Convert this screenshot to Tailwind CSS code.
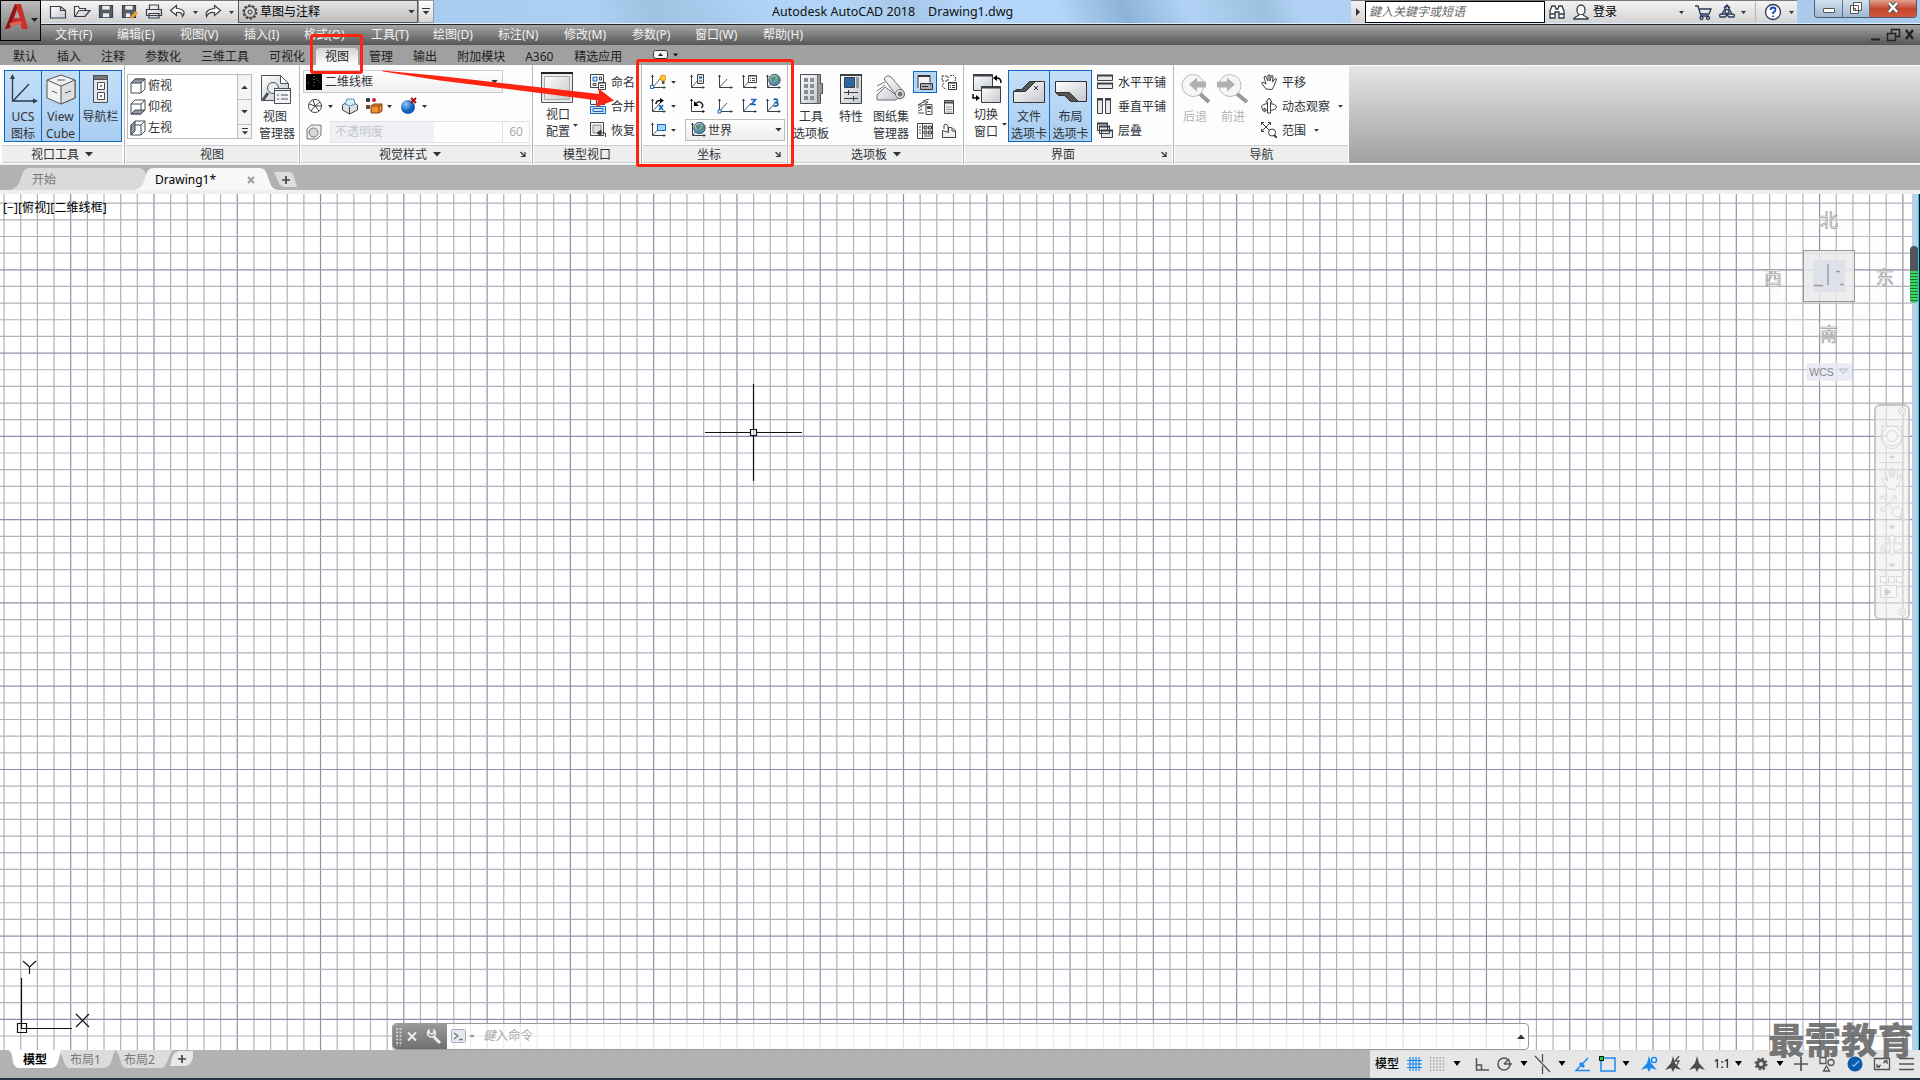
<!DOCTYPE html>
<html lang="zh-CN">
<head>
    <meta charset="UTF-8">
    <meta name="viewport" content="width=device-width, initial-scale=1.0">
    <title>Autodesk AutoCAD 2018</title>
    <script src="https://cdn.jsdelivr.net/npm/@tailwindcss/browser@4"></script>
</head>
<body class="w-[1920px] h-[1080px] overflow-hidden relative bg-[#b2b2b2] text-[12px] leading-[17px] text-[#2f3338] font-['Noto_Sans','Noto_Sans_CJK_SC',sans-serif]">

    <!-- shared icons -->
    <svg class="absolute w-0 h-0">
        <defs>
            <linearGradient id="steel" x1="0" y1="0" x2="1" y2="1"><stop offset="0" stop-color="#fff"/><stop offset="1" stop-color="#c4c7cc"/></linearGradient>
            <radialGradient id="globe" cx=".35" cy=".3"><stop offset="0" stop-color="#d8f0f6"/><stop offset="1" stop-color="#4d8ba6"/></radialGradient>
            <radialGradient id="ball" cx=".35" cy=".3"><stop offset="0" stop-color="#8cc8ff"/><stop offset="1" stop-color="#0f5fb4"/></radialGradient>
            <symbol id="down" viewBox="0 0 8 5"><path d="M0 0h8L4 4.5z" fill="#333"/></symbol>
            <symbol id="ucs" viewBox="0 0 16 16"><path d="M2.5 1v12.500H15" fill="none" stroke="#3a3f46"/><path d="M3 13l7-8" fill="none" stroke="#5a6068"/><path d="M1 3l1.500-2.500L4 3zM13.500 12l2.500 1.500-2.500 1.500z" fill="#3a3f46"/></symbol>
            <symbol id="cornerarrow" viewBox="0 0 6 6"><path d="M.5 1l4 4M5 1v4.500H1" fill="none" stroke="#333" stroke-width="1.200"/></symbol>
            <symbol id="axismark" viewBox="0 0 16 16"><path d="M8 0l2 7 6 7-6-2-2 4-2-4-6 2 6-7z"/></symbol>
        </defs>
    </svg>

    <!-- title bar -->
    <div class="h-6 flex bg-linear-to-r from-[#9ec4ea] via-[#b4d6f8] to-[#a9c9ea] border-b border-[#dcecfb]">
        <div class="w-[41px] shrink-0"></div>
        <div class="w-[197px] flex items-center border-t border-[#777] bg-linear-to-b from-[#f6f6f6] to-[#d0d0d0] shrink-0">
            <svg class="w-[197px] h-[23px]" viewBox="41 1 197 23" fill="none" stroke="#3c4046" stroke-width="1.200">
                <path d="M50.500 6.500h10l5 4v7.500h-15zM60.500 6.500v4h5" fill="url(#steel)"/>
                <path d="M74.500 16.500v-10h4l1 2h6v2M75 16.500l4-6h11l-5 6z" fill="url(#steel)"/>
                <path d="M99.500 5.500h13v12h-13z" fill="#59606a"/><path d="M102 5.500h8v4.500h-8zM102.500 13h7v4.500h-7z" fill="#eee" stroke-width=".6"/>
                <path d="M122.500 5.500h13v12h-13z" fill="#59606a"/><path d="M125 5.500h8v4.500h-8zM125.500 13h5v4.500h-5z" fill="#eee" stroke-width=".6"/><path d="M131 18l6-6" stroke="#f0a030" stroke-width="3"/>
                <path d="M149.500 9.500V5h9v4.500M146.500 9.500h15v6h-15zM149 13.500h10v4.500h-10z" fill="url(#steel)"/>
                <path d="M176.500 5.500l-6 5 6 5v-3q6-1 6 4q5-7-6-8z" fill="#fff"/>
                <path d="M214.500 5.500l6 5-6 5v-3q-6-1-8 4q-2-7 8-8z" fill="#fff"/>
                <path d="M193 11h5l-2.500 3zM229 11h5l-2.500 3z" fill="#333" stroke="none"/>
            </svg>
        </div>
        <div class="w-[180px] shrink-0 border border-[#555] bg-linear-to-b from-[#e4e4e4] to-[#bdbdbd] flex items-center pl-[3px] text-black">
            <svg class="size-4" viewBox="0 0 16 16" fill="none" stroke="#444"><circle cx="8" cy="8" r="6.500" stroke-width="2" stroke-dasharray="2.500 1.500"/><circle cx="8" cy="8" r="5.500"/><circle cx="8" cy="8" r="2"/></svg>
            <span class="ml-0.5 leading-4">草图与注释</span>
            <svg class="w-[7px] h-1 ml-auto mr-0.5"><use href="#down"/></svg>
        </div>
        <div class="w-4 shrink-0 bg-linear-to-b from-white to-[#d5d5d5] flex flex-col items-center justify-center gap-0.5 border border-[#999]">
            <div class="w-2 h-[1.5px] bg-[#333]"></div>
            <svg class="w-2 h-1"><use href="#down"/></svg>
        </div>
        <div class="w-[917px] shrink-0 pl-[338px] text-[12.5px] leading-[23px] text-[#111] whitespace-pre bg-[linear-gradient(65deg,transparent_18%,#a0c2e2_24%,transparent_36%,transparent_45%,#a6c7e8_52%,transparent_58%,transparent_68%,#8db3d8_75%,transparent_82%,#9dc0e0_90%,transparent_94%)]">Autodesk AutoCAD 2018    Drawing1.dwg</div>
        <div class="w-[446px] shrink-0 flex items-center *:shrink-0 border-t border-[#777] bg-linear-to-b from-[#f4f4f4] to-[#d4d4d4]">
            <div class="w-3.5 flex justify-center"><svg class="w-1 h-2"><path d="M0 0l4 4-4 4z" fill="#333"/></svg></div>
            <div class="w-[180px] h-[22px] bg-white border border-black pl-[3px] leading-[20px] italic text-[#666]">鍵入关鍵字或短语</div>
            <svg class="w-12 h-[22px]" viewBox="1545 1 48 22" fill="#fff" stroke="#333a48" stroke-width="1.300"><path d="M1550 18v-7l2-5h3l1 3h2l1-3h3l2 5v7h-5v-6h-4v6zM1550 14h5M1559 14h5"/><ellipse cx="1581" cy="10" rx="4" ry="5"/><path d="M1579 15l-5 3v1h14v-1l-5-3"/></svg>
            <span class="text-black leading-4">登录</span>
            <svg class="w-[178px] h-[22px] ml-1" viewBox="1621 1 178 22" fill="none" stroke="#2c3a5c" stroke-width="1.300">
                <path d="M1679 11h5l-2.500 3zM1741 11h5l-2.500 3zM1789 11h5l-2.500 3z" fill="#333" stroke="none"/>
                <path d="M1695 6h3l3 10h8M1699 9h12l-2 5h-9"/><circle cx="1701.500" cy="18" r="1.500"/><circle cx="1708" cy="18" r="1.500"/>
                <path d="M1727 5l-5 9h10zM1723 14q-5 0-3 3h5l2-2 2 2h5q2-3-3-3M1724 8l3-3 3 3"/><circle cx="1727" cy="11.500" r="2"/>
                <path d="M1755.500 2v20" stroke="#bbb"/><circle cx="1773" cy="12" r="7.500" fill="#fff"/>
                <path d="M1770.500 10q0-2.500 2.500-2.500t2.500 2.500q0 1.500-2.500 2.500v1.500M1773 15.500v1.500" stroke="#1450b4" stroke-width="1.800"/>
            </svg>
        </div>
        <div class="w-[103px] h-[18px] ml-[17px] shrink-0 flex rounded-b border border-t-0 border-[#4d5a6a] overflow-hidden text-white">
            <div class="w-7 bg-linear-to-b from-[#d4e2f0] to-[#9fb8d1] border-r border-[#5e7085] flex justify-center pt-2"><div class="w-3 h-[5px] bg-white border border-[#555] rounded-[1px]"></div></div>
            <div class="w-[27px] bg-linear-to-b from-[#d4e2f0] to-[#9fb8d1] border-r border-[#5e7085] flex justify-center pt-[2px]"><svg class="w-3 h-3" fill="#fff" stroke="#555"><path d="M3.500.5h8v8h-8zM.5 3.500h8v8h-8zM3.500 6.500h2v2h-2z"/></svg></div>
            <div class="grow bg-linear-to-b from-[#e3a193] via-[#c44630] to-[#d2563c] flex justify-center pt-[2px]"><svg class="w-3 h-3"><path d="M2 1l8 9M10 1l-8 9" stroke="#555" stroke-width="4.500"/><path d="M2 1l8 9M10 1l-8 9" stroke="#fff" stroke-width="2.500"/></svg></div>
        </div>
    </div>

    <!-- menu bar -->
    <div class="h-[21px] border-t border-[#222] bg-linear-to-b from-[#a5a5a5] to-[#565656] flex items-center pl-[55px] text-[#f2f2f2] text-[12px] leading-5 whitespace-nowrap">
        <span class="w-[62px]">文件(F)</span>
        <span class="w-[63px]">编辑(E)</span>
        <span class="w-16">视图(V)</span>
        <span class="w-[60px]">插入(I)</span>
        <span class="w-[67px]">格式(O)</span>
        <span class="w-[62px]">工具(T)</span>
        <span class="w-[65px]">绘图(D)</span>
        <span class="w-[66px]">标注(N)</span>
        <span class="w-[68px]">修改(M)</span>
        <span class="w-[63px]">参数(P)</span>
        <span class="w-[68px]">窗口(W)</span>
        <span>帮助(H)</span>
        <svg class="w-[46px] h-3.5 ml-auto mr-[3px]" fill="none" stroke="#222"><path d="M0 11.500h9" stroke-width="2"/><path d="M20.500 5V1.500h8v7h-4M16.500 5.500h8v7h-8z" stroke-width="1.500"/><path d="M35 2l7 9M42 2l-7 9" stroke-width="2.500"/></svg>
    </div>

    <!-- ribbon tabs -->
    <div class="h-5 bg-[#a0a0a0] flex items-center pl-[13px] gap-5 leading-5 pt-[3px] text-[#222] whitespace-nowrap">
        <span>默认</span><span>插入</span><span>注释</span><span>参数化</span><span>三维工具</span><span>可视化</span>
        <span class="w-[42px] -mx-[9px] h-[17px] leading-[17px] text-center rounded-t bg-linear-to-b from-[#d4d4d4] to-white">视图</span>
        <span>管理</span><span>输出</span><span>附加模块</span><span class="w-[29px]">A360</span><span>精选应用</span>
        <svg class="w-7 h-[11px] ml-[11px] -mt-1"><rect x=".5" y="1.500" width="14" height="8" rx="2" fill="#f4f4f4" stroke="#333"/><path d="M5 7l2.500-3L10 7z" fill="#222"/><path d="M20 4.500h5l-2.500 3z" fill="#111"/></svg>
    </div>

    <!-- ribbon -->
    <div class="h-[100px] flex bg-[#fdfdfd] border-b border-[#eee] whitespace-nowrap">
        <!-- 视口工具 -->
        <section class="w-[125px] shrink-0 flex flex-col border-r border-[#b8b8b8]">
            <div class="h-20 flex pt-[5px] pl-1 text-center">
                <button class="w-[38px] h-[72px] border border-[#1468bc] bg-linear-to-b from-[#c4dff7] to-[#a9cef2] flex flex-col items-center pt-[3px]">
                    <svg class="w-8 h-[34px] shrink-0" fill="none" stroke="#2f3a48" stroke-width="1.300"><path d="M5.500 3v24H28M6 27L22 10"/><path d="M3 5l2.500-5L8 5zM26 24.500l5 2.500-5 2.500z" fill="#2f3a48" stroke="none"/></svg>
                    <div>UCS</div><div>图标</div>
                </button>
                <button class="w-[38px] h-[72px] border border-l-0 border-[#1468bc] bg-linear-to-b from-[#c4dff7] to-[#a9cef2] flex flex-col items-center pt-[3px]">
                    <svg class="w-8 h-[34px] shrink-0" fill="#f2f2f2" stroke="#555"><path d="M16 1L2 6v18l14 6 14-6V6z"/><path d="M2 6l14 6v18l14-6V6l-14 6" fill="#dcdee0"/><path d="M12 6h8M7 17l5 2M20 19l6-2"/></svg>
                    <div>View</div><div>Cube</div>
                </button>
                <button class="w-[42px] h-[72px] border border-l-0 border-[#1468bc] bg-linear-to-b from-[#c4dff7] to-[#a9cef2] flex flex-col items-center pt-[3px]">
                    <svg class="w-8 h-[34px] shrink-0" fill="#e4e6e9" stroke="#4b5058"><path d="M8.500 1.500h14v27h-14z"/><path d="M8.500 1.500h14v4h-14z" fill="#777"/><path d="M12.500 8.500h7v7h-7zM12.500 18.500h7v7h-7z" fill="#fff"/><path d="M15.500 11.500h1v1h-1zM15.500 21.500h1v1h-1z"/></svg>
                    <div>导航栏</div>
                </button>
            </div>
            <div class="h-[18px] mx-[2px] bg-[#eee] border-y border-[#ccc] flex items-center justify-center gap-1.5">视口工具<svg class="w-2 h-[5px]"><use href="#down"/></svg></div>
        </section>
        <!-- 视图 -->
        <section class="w-[175px] shrink-0 flex flex-col border-r border-[#b8b8b8]">
            <div class="h-20 flex pt-[5px] pl-0.5">
                <div class="w-[125px] h-[65px] mt-1 border border-[#bbb] bg-white flex shrink-0">
                    <div class="w-[109px] pl-0.5">
                        <div class="h-[21px] flex items-center gap-0.5"><svg class="size-4" fill="#fff" stroke="#444b55"><path d="M1 5l4-4h10v10l-4 4H1zM11 5v10M11 5l4-4"/><path d="M1 5l4-4h10l-4 4z" fill="#8f98a5"/></svg>俯视</div>
                        <div class="h-[21px] flex items-center gap-0.5"><svg class="size-4" fill="#fff" stroke="#444b55"><path d="M1 5l4-4h10v10l-4 4H1zM1 5h10v10M11 5l4-4"/><path d="M1 15l4-4h10l-4 4z" fill="#8f98a5"/></svg>仰视</div>
                        <div class="h-[21px] flex items-center gap-0.5"><svg class="size-4" fill="#fff" stroke="#444b55"><path d="M1 5l4-4h10v10l-4 4H1zM1 5h10v10M11 5l4-4"/><path d="M1 5l4-4v10l-4 4z" fill="#8f98a5"/></svg>左视</div>
                    </div>
                    <div class="w-3.5 border-l border-[#bbb] bg-[#f4f4f4] flex flex-col">
                        <div class="h-[25px] flex items-center justify-center border-b border-[#bbb]"><svg class="w-[7px] h-1 rotate-180"><use href="#down"/></svg></div>
                        <div class="h-[25px] flex items-center justify-center border-b border-[#bbb]"><svg class="w-[7px] h-1"><use href="#down"/></svg></div>
                        <div class="grow flex flex-col items-center justify-center gap-0.5"><div class="w-1.5 h-px bg-[#333]"></div><svg class="w-1.5 h-1"><use href="#down"/></svg></div>
                    </div>
                </div>
                <div class="w-[46px] pt-1 text-center">
                    <svg class="w-8 h-[34px] ml-2" fill="url(#steel)" stroke="#4b5058"><path d="M1.500 1.500h19l8 8v17h-27zM20.500 1.500v8h8"/><circle cx="13" cy="14" r="5.500" fill="#e9eef2"/><path d="M8 19l-5 7" stroke-width="3"/><path d="M14.500 14.500h16v15h-16z" fill="#f4f4f4"/><path d="M14.500 14.500h16v2h-16zM17 21h2M21 21h7M17 25h2M21 25h7"/></svg>
                    <div>视图</div><div class="-mx-1 pl-1">管理器</div>
                </div>
            </div>
            <div class="h-[18px] mx-px bg-[#eee] border-y border-[#ccc] flex items-center justify-center">视图</div>
        </section>
        <!-- 视觉样式 -->
        <section class="w-[233px] shrink-0 flex flex-col border-r border-[#b8b8b8]">
            <div class="h-20 pt-[5px] pl-[3px]">
                <div class="w-[200px] h-[23px] border border-[#c9c9c9] bg-linear-to-b from-white to-[#eee] flex items-center pl-0.5 pr-1">
                    <svg class="size-4 bg-black" stroke="#999" fill="none"><path d="M8 2v12M2 9h3M10 4l4 5" stroke-dasharray="1 2"/></svg>
                    <span class="ml-[3px]">二维线框</span>
                    <svg class="w-[7px] h-1 ml-auto"><use href="#down"/></svg>
                </div>
                <svg class="block w-[228px] h-[26px]" viewBox="303 93 228 26" fill="#fff" stroke="#444">
                    <circle cx="315" cy="106" r="6.500"/><path d="M309 104l6 2 5-4M315 106l-2-6M315 106l4 5M311 111l4-5M315 106h6" fill="none"/>
                    <path d="M328 105h5l-2.500 3zM387 105h5l-2.500 3zM422 105h5l-2.500 3z" fill="#333" stroke="none"/>
                    <path d="M342.500 105l7-5 8 5v5l-8 4-7-4z" fill="#dcdfe3"/><path d="M345 104l2-5h7l1 5-5 2z" fill="#d6ecf8" stroke="#5590b8"/><path d="M349.500 107v7"/>
                    <path d="M371 106l3-2h8v7l-3 2h-8z" fill="#f19032" stroke="#884010"/><path d="M371 106h8v7M379 106l3-2" stroke="#884010" fill="none"/><path d="M366.500 98.500h3v3h-3z" fill="#222c80"/><path d="M366.500 105.500h3v3h-3z" fill="#a04010"/><circle cx="374" cy="100" r="2" fill="#d02020" stroke="none"/>
                    <circle cx="408" cy="107" r="7" fill="url(#ball)" stroke="none"/><path d="M411 98l5 5M416 98l-5 5" stroke="#b01010" stroke-width="2"/>
                </svg>
                <div class="flex items-center h-[22px] mt-0.5">
                    <svg class="size-4 ml-[3px]" fill="#eee" stroke="#777"><path d="M1 5l4-4h10v10l-4 4H1z"/><circle cx="7.500" cy="8.500" r="4.500" fill="#d6d6d6"/></svg>
                    <div class="ml-2 w-[200px] h-[22px] border border-[#e2e2e2] flex text-[#c3c6ca]">
                        <div class="w-[103px] bg-[#f0f1f4] pl-1 leading-5">不透明度</div>
                        <div class="ml-auto w-[27px] border-l border-[#e2e2e2] text-center leading-5 text-[#aaa]">60</div>
                    </div>
                </div>
            </div>
            <div class="h-[18px] mx-px pl-[78px] pr-[5px] bg-[#eee] border-y border-[#ccc] flex items-center gap-1.5">视觉样式<svg class="w-2 h-[5px]"><use href="#down"/></svg><svg class="size-1.5 ml-auto"><use href="#cornerarrow"/></svg></div>
        </section>
        <!-- 模型视口 -->
        <section class="w-[109px] shrink-0 flex flex-col border-r border-[#b8b8b8]">
            <div class="h-20 flex pt-[7px] pl-2">
                <div class="w-[49px] relative">
                    <svg class="w-8 h-[34px]" fill="#e9ebee" stroke="#555"><path d="M.5.5h31v30H.5z"/><path d="M0 1h32" stroke="#222" stroke-width="2"/><path d="M3.500 4.500h25v23h-25z" fill="url(#steel)" stroke="#aaa"/></svg>
                    <div class="pl-[5px]">视口</div><div class="pl-[5px]">配置</div>
                    <svg class="absolute w-[5px] h-[3px] left-[32px] top-[52px]"><use href="#down"/></svg>
                </div>
                <div class="flex flex-col -mt-[2px]">
                    <div class="h-6 flex items-center gap-[5px]"><svg class="size-4" fill="#fff" stroke="#444"><path d="M.5.5h13v13H.5z"/><path d="M3 3h4v4H3z" fill="#cfe7fa" stroke="#1468bc"/><path d="M9.500 3h2v3h-2zM3 9.500h3v2H3zM8.500 8.500h7v7h-7z"/><path d="M8.500 9h7M10 11.500h4M10 13.500h4"/></svg>命名</div>
                    <div class="h-6 flex items-center gap-[5px]"><svg class="size-4" fill="#fff" stroke="#444"><path d="M.5.500h6v6h-6zM8.500.5h6v6h-6z"/><path d="M.5 8.500h15v7H.5zM3 10.500h10v3H3z" fill="#cfe7fa" stroke="#1468bc"/></svg>合并</div>
                    <div class="h-6 flex items-center gap-[5px]"><svg class="size-4" fill="#ddd" stroke="#444"><path d="M.5.5h13v13H.5z" fill="#fff"/><path d="M3 3h8v8H3z" stroke="#888"/><path d="M15.500 15v-4h-5" fill="none"/><path d="M11 8l-4 3 4 3z" fill="#333"/></svg>恢复</div>
                </div>
            </div>
            <div class="h-[18px] mx-px bg-[#eee] border-y border-[#ccc] flex items-center justify-center">模型视口</div>
        </section>
        <!-- 坐标 -->
        <section class="w-[146px] shrink-0 flex flex-col border-r border-[#b8b8b8]">
            <div class="h-20 flex flex-col pt-[5px] pl-2">
                <div class="h-6 flex items-center">
                    <svg class="size-4" viewBox="0 0 16 16"><use href="#ucs"/><path d="M.5 11.500h3v3h-3z" fill="#fff" stroke="#1468bc"/><circle cx="13" cy="4" r="3" fill="#ffc830" stroke="#d08010" stroke-width=".7"/><path d="M12 7h2.500v3H12z" fill="#555"/></svg>
                    <svg class="w-[5px] h-[3px] ml-[5px]"><use href="#down"/></svg>
                    <svg class="size-4 ml-[13px]" viewBox="0 0 16 16"><use href="#ucs"/><path d="M8.500.5h6v9h-6z" fill="#e8e8e8" stroke="#444"/><path d="M10 2.500h3v2h-3z" fill="#1468bc"/><path d="M10 7h3" stroke="#444"/></svg>
                    <svg class="size-4 ml-3" viewBox="0 0 16 16"><use href="#ucs"/></svg>
                    <svg class="size-4 ml-2" viewBox="0 0 16 16"><use href="#ucs"/><path d="M7.500 1.500h8v7h-8z" fill="#fff" stroke="#444"/><path d="M7.500 2h8M9 4.500h1M11 4.500h3M9 6.500h1M11 6.500h3" stroke="#444"/></svg>
                    <svg class="size-4 ml-2" viewBox="0 0 16 16"><use href="#ucs"/><circle cx="9.500" cy="6" r="5.700" fill="url(#globe)" stroke="#456"/><path d="M6 3l4-1 1 3-3 3-2-2zM12 7l2-2v4z" fill="#5c9464"/></svg>
                </div>
                <div class="h-6 flex items-center">
                    <svg class="size-4" viewBox="0 0 16 16"><use href="#ucs"/><path d="M6 6q0-4 5-3.500" fill="#fff" stroke="#111" stroke-width="1.500"/><path d="M10 0l4 2.500-4 3z"/><path d="M9 7l4 5M13 7l-4 5" stroke="#1468bc" stroke-width="1.700"/></svg>
                    <svg class="w-[5px] h-[3px] ml-[5px]"><use href="#down"/></svg>
                    <svg class="size-4 ml-[13px]" viewBox="0 0 16 16"><path d="M2.500 1v12.500H15" fill="none" stroke="#3a3f46"/><path d="M1 3l1.500-2.500L4 3zM13.500 12l2.500 1.500-2.500 1.500z"/><path d="M7 5.500q3-3 5.500-.5t0 5" fill="none" stroke="#111" stroke-width="1.400"/><path d="M5 3v5h5z"/></svg>
                    <svg class="size-4 ml-3" viewBox="0 0 16 16"><use href="#ucs"/><path d="M1 12h3v3H1z" fill="#fff" stroke="#1468bc"/></svg>
                    <svg class="size-4 ml-2" viewBox="0 0 16 16"><use href="#ucs"/><path d="M10 1.500h4.500l-4 5H15" fill="none" stroke="#1468bc" stroke-width="1.700"/></svg>
                    <svg class="size-4 ml-2" viewBox="0 0 16 16"><use href="#ucs"/><path d="M8.500 1.500q4-1 4 1t-3 2q4 0 3.500 2t-4.500 1.500" fill="none" stroke="#1468bc" stroke-width="1.600"/></svg>
                </div>
                <div class="h-6 flex items-center">
                    <svg class="size-4" viewBox="0 0 16 16"><use href="#ucs"/><path d="M7.500 2.500h8v6h-8z" fill="#a9d2f5" stroke="#1468bc"/></svg>
                    <svg class="w-[5px] h-[3px] ml-[5px]"><use href="#down"/></svg>
                    <div class="ml-[9px] w-[100px] h-[22px] border border-[#bbb] bg-linear-to-b from-white to-[#ececec] flex items-center pl-1 pr-0.5">
                        <svg class="size-4" viewBox="0 0 16 16"><use href="#ucs"/><circle cx="9.500" cy="6" r="5.700" fill="url(#globe)" stroke="#456"/><path d="M6 3l4-1 1 3-3 3-2-2zM12 7l2-2v4z" fill="#5c9464"/></svg>
                        <span class="ml-0.5">世界</span><svg class="w-[7px] h-1 ml-auto"><use href="#down"/></svg>
                    </div>
                </div>
            </div>
            <div class="h-[18px] mx-px pl-[54px] pr-[5px] bg-[#eee] border-y border-[#ccc] flex items-center">坐标<svg class="size-1.5 ml-auto"><use href="#cornerarrow"/></svg></div>
        </section>
        <!-- 选项板 -->
        <section class="w-[176px] shrink-0 flex flex-col border-r border-[#b8b8b8]">
            <div class="h-20 flex pt-[7px] pl-[3px]">
                <div class="w-10 pt-0.5 text-center">
                    <svg class="w-8 h-[34px] mx-auto" fill="url(#steel)" stroke="#4b5058"><path d="M5.500.5h17v29h-17z"/><path d="M22.500.5h3v9h2v10h-2v10h-3" fill="#999"/><path d="M9 4h4v4H9zM15 4h4v4h-4zM9 10h4v4H9zM15 10h4v4h-4zM9 16h4v4H9zM15 16h4v4h-4zM9 22h4v4H9zM15 22h4v4h-4z" fill="#8a8e94" stroke="none"/></svg>
                    <div>工具</div><div>选项板</div>
                </div>
                <div class="w-10 pt-0.5 text-center">
                    <svg class="w-8 h-[34px] mx-auto" fill="url(#steel)" stroke="#3a3f46"><path d="M5.500.5h21v29h-21z"/><path d="M5 1h22" stroke-width="2"/><path d="M9.500 3.500h10v10h-10z" fill="#2a679e"/><path d="M21 3h3v11h-3z" fill="#999" stroke="none"/><path d="M9 18.500h14M13.500 16v5M9 24.500h14M18.500 22v5"/></svg>
                    <div>特性</div>
                </div>
                <div class="w-10 pt-0.5 text-center">
                    <svg class="w-8 h-[34px] mx-auto" fill="url(#steel)" stroke="#6a6f76"><path d="M2 21l8-8 14 10-3 3H2zM2 17l8-6M2 12l8-4"/><path d="M9 5q3-5 7-2l13 15q2 6-5 7z"/><circle cx="25" cy="20" r="4.500"/><circle cx="25" cy="20" r="2" fill="#777"/></svg>
                    <div>图纸集</div><div>管理器</div>
                </div>
                <div class="flex flex-col -mt-[1px] ml-0.5">
                    <div class="h-[22px] flex items-center"><div class="w-6 h-[22px] border border-[#1468bc] bg-[#b6d6f3] flex items-center justify-center"><svg class="size-4" fill="#f4f4f4" stroke="#333"><path d="M1 14V1.500h12V8"/><path d="M1 2h12" stroke-width="2"/><path d="M3.500 9.500h12v6h-12z" fill="#aab"/><path d="M5 12.500h6M13 11h1"/></svg></div>
                        <svg class="size-4 ml-1" fill="none" stroke="#333"><path d="M1 2h6v5H1zM3 9q-4 4 2 6M9 2l3-1 3 3-1 3" stroke-dasharray="2 1"/><path d="M7.500 8.500h8v7h-8z" fill="#fff"/><path d="M7.500 9h8M9 11.500h1M11 11.500h3M9 13.500h1M11 13.500h3"/></svg></div>
                    <div class="h-[27px] flex items-center pl-1"><svg class="size-4" fill="#fff" stroke="#444"><path d="M1 6l5-3h5l-4 3zM1 9l4-2M1 12l4-2M1 14h6M6 2l6-2"/><path d="M9 5.500h6v10H9z"/><path d="M10.500 7.500h3v2h-3z" fill="#1468bc"/><path d="M10.500 12.500h3"/></svg>
                        <svg class="size-4 ml-2" fill="#eee" stroke="#444"><path d="M3.500 1.500h9v13h-9z"/><path d="M4 3.500h8" stroke-width="2"/><path d="M5.500 8h5M5.500 10.500h5M5.500 13h5" stroke-dasharray="1 1"/></svg></div>
                    <div class="h-[22px] flex items-center pl-1"><svg class="size-4" fill="#fff" stroke="#444"><path d="M.5.500h15v15H.5zM5.500 0v16"/><path d="M7 3h3v3H7zM11.500 3h3v3h-3zM7 8h3v3H7zM11.500 8h3v3h-3zM2 4h2M2 7h2M2 10h2M7 13h7" fill="#bbb"/></svg>
                        <svg class="size-4 ml-2" fill="#f0f0f0" stroke="#444"><path d="M1.500 7.500v7h13v-7l-4-3h-3v5z"/><path d="M3 6V2l2-1 2 2v5M11 5v3h3" fill="#fff"/></svg></div>
                </div>
            </div>
            <div class="h-[18px] mx-px pl-[62px] bg-[#eee] border-y border-[#ccc] flex items-center gap-1.5">选项板<svg class="w-2 h-[5px]"><use href="#down"/></svg></div>
        </section>
        <!-- 界面 -->
        <section class="w-[210px] shrink-0 flex flex-col border-r border-[#b8b8b8]">
            <div class="h-20 flex pt-[5px]">
                <div class="w-11 pt-1 text-center relative">
                    <svg class="w-8 h-8 ml-[7px]" fill="url(#steel)" stroke="#3a3f46"><path d="M2.500.5h19v16h-19z"/><path d="M2 1.500h20" stroke-width="2"/><path d="M10.500 12.500h19v16h-19z"/><path d="M10 13.500h20" stroke-width="2"/><path d="M26 4q4 0 4 5M2 20v4h4" fill="none" stroke="#000" stroke-width="1.500"/><path d="M26 1v6l-4-3zM5 21v6l4-3z" fill="#000" stroke="none"/></svg>
                    <div>切换</div><div>窗口</div>
                    <svg class="absolute w-[5px] h-[3px] left-[38px] top-[53px]"><use href="#down"/></svg>
                </div>
                <button class="w-[42px] h-[72px] border border-[#1468bc] bg-linear-to-b from-[#c4dff7] to-[#a9cef2] flex flex-col items-center pt-[3px]">
                    <svg class="w-8 h-[34px] shrink-0" fill="url(#steel)" stroke="#333"><path d="M.5 28.500v-11h6l11-10h14v21z"/><path d="M.5 17.500l3-2h5l8-8h6l-10 10z" fill="#555"/><path d="M21 12l4 4M25 12l-4 4"/></svg>
                    <div>文件</div><div>选项卡</div>
                </button>
                <button class="w-[42px] h-[72px] border border-l-0 border-[#1468bc] bg-linear-to-b from-[#c4dff7] to-[#a9cef2] flex flex-col items-center pt-[3px]">
                    <svg class="w-8 h-[34px] shrink-0" fill="url(#steel)" stroke="#333"><path d="M.5 7.500h31v20h-14l-8-9h-9z"/><path d="M.5 18.500h14l9 9h-8l-6-6h-6z" fill="#555"/></svg>
                    <div>布局</div><div>选项卡</div>
                </button>
                <div class="flex flex-col ml-[5px]">
                    <div class="h-6 flex items-center gap-[5px]"><svg class="size-4" fill="#e8e8ec" stroke="#3a3f46"><path d="M.5 1.500h15v5H.5zM.5 9.500h15v5H.5z"/><path d="M0 1.500h16M0 9.500h16" stroke-width="2"/></svg>水平平铺</div>
                    <div class="h-6 flex items-center gap-[5px]"><svg class="size-4" fill="#e8e8ec" stroke="#3a3f46"><path d="M.5.5h5v15h-5zM8.500.5h5v15h-5z"/><path d="M0 1.500h6M8 1.500h6" stroke-width="2"/></svg>垂直平铺</div>
                    <div class="h-6 flex items-center gap-[5px]"><svg class="size-4" fill="#e8e8ec" stroke="#3a3f46"><path d="M.5 1.500h10v7H.5zM2.500 4.500h10v7h-10zM4.500 8.500h11v7h-11z"/><path d="M0 1.500h11M2 4.500h11M4 8.500h12" stroke-width="2"/></svg>层叠</div>
                </div>
            </div>
            <div class="h-[18px] mx-px pl-[86px] pr-[5px] bg-[#eee] border-y border-[#ccc] flex items-center">界面<svg class="size-1.5 ml-auto"><use href="#cornerarrow"/></svg></div>
        </section>
        <!-- 导航 -->
        <section class="w-[175px] shrink-0 flex flex-col">
            <div class="h-20 flex pt-[5px] pl-0.5">
                <div class="w-[38px] pt-1 text-center text-[#b4b4b4]">
                    <svg class="w-8 h-[34px] ml-1" fill="#f6f6f6" stroke="#bbb"><path d="M19 19l10 9" stroke="#999" stroke-width="4"/><circle cx="13" cy="11.500" r="11"/><path d="M9 10.500l8-7v4h9v6h-9v4z" fill="#b0b0b0" stroke="none"/></svg>
                    <div>后退</div>
                </div>
                <div class="w-[38px] pt-1 text-center text-[#b4b4b4]">
                    <svg class="w-8 h-[34px] mx-auto" fill="#f6f6f6" stroke="#bbb"><path d="M19 19l11 9" stroke="#999" stroke-width="4"/><circle cx="13" cy="11.500" r="11"/><path d="M18 10.500l-8-7v4H0v6h10v4z" fill="#b0b0b0" stroke="none"/></svg>
                    <div>前进</div>
                </div>
                <div class="flex flex-col ml-[9px]">
                    <div class="h-6 flex items-center gap-[5px]"><svg class="size-4" fill="#fff" stroke="#3a3f46"><path d="M5 15L.5 9l1-1L5 10 3 3l1.500-1L7 7V1h2v6l1.500-5.500L12 2l-.5 6L14 4.500l1.500.5L13 12l-2 3.500z"/></svg>平移</div>
                    <div class="h-6 flex items-center gap-[5px]"><svg class="size-4" fill="#fff" stroke="#3a3f46"><ellipse cx="8" cy="9" rx="7.500" ry="3.500" fill="none"/><path d="M6.500 15V4H5l3-4 3 4H9.500v11zM4 10l-3 2 3 2z"/></svg>动态观察<svg class="w-[5px] h-[3px] ml-[3px]"><use href="#down"/></svg></div>
                    <div class="h-6 flex items-center gap-[5px]"><svg class="size-4" fill="none" stroke="#3a3f46"><path d="M1 1l8 8M9 1L1 9M.5 3V.5H3M7 .5h2.500V3M.5 7v2.500H3" /><circle cx="11" cy="10.500" r="3.500" fill="#fff"/><path d="M13 13l3 3" stroke-width="2"/></svg>范围<svg class="w-[5px] h-[3px] ml-[3px]"><use href="#down"/></svg></div>
                </div>
            </div>
            <div class="h-[18px] mx-px bg-[#eee] border-y border-[#ccc] flex items-center justify-center">导航</div>
        </section>
        <div class="grow mt-px h-[97px] bg-linear-to-b from-[#e6e6e6] to-[#a0a0a0]"></div>
    </div>

    <!-- drawing file tabs -->
    <div class="h-[25px] bg-[#b2b2b2] relative">
        <svg class="absolute left-0 top-0 w-[310px] h-[25px]">
            <path d="M9 25q8-1 11-9l3-9q2-4 7-4h108q7 0 9 9v13z" fill="#dadada"/>
            <path d="M134 25q8-1 10-9l3-9q2-4 7-4h106q5 0 7 6l3 9q2 6 8 7z" fill="#f8f8f8"/>
            <path d="M274 7h14q5 0 6 5l3 10h-11q-6 0-8-6z" fill="#ddd"/>
            <path d="M282 15h8M286 11v8" stroke="#444" stroke-width="1.700"/>
            <path d="M248 12l6 6M254 12l-6 6" stroke="#999" stroke-width="1.800"/>
        </svg>
        <div class="relative flex pl-8 leading-[29px]"><span class="w-[123px] text-[#777]">开始</span><span class="text-black">Drawing1*</span></div>
    </div>

    <!-- model space -->
    <main class="h-[860px] border-t-4 border-[#f0f0f0] bg-white relative">
        <svg id="space" class="block w-[1920px] h-[856px]" viewBox="0 194 1920 856">
            <g id="grid"></g>
            <g stroke="#111" stroke-width="1.200" fill="none">
                <path d="M753.500 384v45M753.500 436v45M705 432.500h45M757 432.500h45M750.500 429.500h6v6h-6z"/>
                <path d="M21.500 978v46.500M21.500 1028.500h50.500M17.500 1023.500h9v9h-9zM21.500 1023v5.500h5"/>
                <path d="M23 961l6.500 6 6.500-6M29.500 967v7M76 1014l13 13M89 1014l-13 13"/>
            </g>
        </svg>
        <div class="absolute left-[3px] top-[5px] text-black leading-[18px] tracking-[0.1px]">[−][俯视][二维线框]</div>

        <!-- view cube -->
        <svg class="absolute left-[1750px] top-[10px] w-[160px] h-[190px]" viewBox="1750 204 160 190" font-size="18" text-anchor="middle">
            <circle cx="1828" cy="276" r="54" fill="none" stroke="#eee" stroke-width="11" opacity=".18"/>
            <rect x="1803.500" y="250.500" width="51" height="51" fill="#eaeaea" fill-opacity=".85" stroke="#999"/>
            <rect x="1813" y="260" width="32" height="32" fill="#dfe1e8"/>
            <path d="M1828 264v21M1814 285.500h9M1836 271.500h4M1840 284.500h4" stroke="#9a9ca2" stroke-width="1.500"/>
            <g fill="#f2f2f2" stroke="#9c9c9c" stroke-width=".7"><text x="1829" y="227">北</text><text x="1773" y="284">西</text><text x="1885" y="284">东</text><text x="1829" y="341">南</text></g>
            <rect x="1806" y="363" width="46" height="18" rx="4" fill="#e6e8f3" opacity=".85"/>
            <path d="M1839.500 369h8l-4 4.500z" fill="none" stroke="#b0b8c4"/>
            <text x="1821.500" y="375.500" font-size="10.500" fill="#888" class="font-['Liberation_Sans',sans-serif]">WCS</text>
        </svg>

        <!-- navigation bar -->
        <svg class="absolute left-[1874px] top-[210px] w-9 h-[217px]" fill="#f6f6f6" stroke="#d8d8d8">
            <rect x="1" y="1" width="34" height="214" rx="5" fill="#eee" fill-opacity=".6" stroke="#bbb" stroke-opacity=".8" stroke-width="2"/>
            <circle cx="28" cy="7" r="3.500"/><path d="M26 5l4 4M30 5l-4 4M5 58.500h26M5 166.500h26"/>
            <path d="M8 22h20v10a10.500 10.500 0 1 1-20-2z"/><circle cx="18" cy="32" r="10"/><circle cx="18" cy="32" r="5.500"/><path d="M7 32h5M24 32h5"/>
            <path d="M15.500 52h5l-2.500 3zM15.500 122h5l-2.500 3zM15.500 160h5l-2.500 3z" fill="#ccc"/>
            <path d="M15 85L7 75l2-1 5 3-3-11 2-1 4 9V64h2v10l3-9 2 1-1 10 4-6 1 2-4 9-3 5z"/>
            <path d="M7 92l15 15M22 92L7 107M7 96v-4h4M18 92h4v4M7 103v4h4" fill="none"/><circle cx="23" cy="108" r="5"/><path d="M26 112l4 5" stroke-width="2.500"/>
            <ellipse cx="18" cy="143" rx="11" ry="4.500" fill="none"/><path d="M16 150v-14h-2l4-6 4 6h-2v14zM10 143l-4 3 4 3z"/>
            <path d="M6.500 172.500h6v6h-6zM14.500 172.500h6v6h-6zM22.500 172.500h6v6h-6zM6.500 181.500h16v12h-16z"/><path d="M11 184v8l6-4z" fill="#ccc"/><circle cx="28" cy="208" r="3.500"/><path d="M26 207h4M26 209h4"/>
        </svg>

        <!-- command line -->
        <div class="absolute left-[392px] top-[829px] w-[1137px] h-[27px] flex border border-[#999] rounded bg-white/75">
            <div class="w-[54px] h-full rounded-l bg-linear-to-b from-[#999] to-[#707070]">
                <svg class="w-[54px] h-[25px]" fill="none" stroke="#eee"><path d="M4 4v18M7.500 4v18" stroke="#ccc" stroke-width="2" stroke-dasharray="2 1.500"/><path d="M15 8.500l8 8M23 8.500l-8 8" stroke-width="2"/><path d="M38 10l9 9" stroke-width="3"/><path d="M36 6a4 4 0 1 0 5 0v3l-2 1-3-1z" fill="#888" stroke-width="1.500"/></svg>
            </div>
            <svg class="w-9 h-[25px]"><rect x="4.500" y="5.500" width="14" height="13" rx="1" fill="#e6eaf0" stroke="#a5acb5"/><path d="M7 9l4 3-4 3M12 15.500h4" fill="none" stroke="#777" stroke-width="1.300"/><path d="M22 11h6l-3 3z" fill="#999"/></svg>
            <span class="leading-6 text-[#aaa] text-[12.5px]"><i>鍵</i>入命令</span>
            <svg class="w-2 h-[5px] ml-auto mt-[10px] mr-[3px] rotate-180"><use href="#down"/></svg>
        </div>

        <!-- right window edge -->
        <div class="absolute right-0 top-0 w-2 h-full bg-[#b7d0ea] border-r border-[#111] flex justify-end"><div class="w-px bg-[#20c8e8]"></div></div>
        <div class="absolute left-[1910px] top-[52px] w-2 h-[57px] rounded-full overflow-hidden bg-[#50565e] flex flex-col justify-end"><div class="h-8 bg-[repeating-linear-gradient(#36d860_0_2px,#2c7040_2px_3px)]"></div></div>
    </main>

    <!-- layout tabs and status bar -->
    <footer class="h-7 flex bg-[#b2b2b2] relative">
        <svg class="absolute left-0 top-0 w-[200px] h-[19px]">
            <path d="M114 0q3 0 5 6l2 6q1 6 6 6h33q5 0 7-6l4-9q1-3 4-3z" fill="#dcdcdc"/>
            <path d="M58 0q2 1 4 6l2 6q2 6 6 6h33q6 0 8-6l4-12z" fill="#dcdcdc"/>
            <path d="M8 0q3 1 4 6l1 6q2 6 6 6h32q5 0 7-6l3-12z" fill="#fff"/>
            <path d="M172 8q2-7 8-7h13v6q-2 9-8 9h-15z" fill="#e8e8e8"/><path d="M178 9h8M182 5v8" stroke="#444" stroke-width="1.700"/>
        </svg>
        <div class="relative flex pl-[23px] w-[1370px] shrink-0 leading-[19px] text-[#777]">
            <span class="w-[47px] font-bold text-black">模型</span><span class="w-[54px]">布局1</span><span>布局2</span>
        </div>
        <div class="w-[550px] bg-[#e6e6e6] flex items-center *:shrink-0 text-black border-t border-[#ddd] pb-[2px]">
            <span class="w-[34px] text-center font-medium">模型</span>
            <svg class="w-[22px] h-4" stroke="#1e88f0" stroke-width="1.200"><path d="M6 1v14M9 1v14M12 1v14M15 1v14M3 4.500h15M3 8h15M3 11.500h15" /></svg>
            <svg class="w-[23px] h-4" stroke="#666" stroke-width="1.200" stroke-dasharray="1.200 2"><path d="M4 2h15M4 5h15M4 8h15M4 11h15M4 14h15"/></svg>
            <svg class="w-4 h-[5px]"><path d="M4.500 0h7L8 5z"/></svg>
            <svg class="w-[27px] h-4 ml-[3px]" fill="none" stroke="#555" stroke-width="1.500"><path d="M8.500 2v12H21M8.500 9h5v5"/></svg>
            <svg class="w-[19px] h-4" fill="none" stroke="#555" stroke-width="1.500"><circle cx="9" cy="8" r="6"/><path d="M9 8h8M9 8l5-5"/></svg>
            <svg class="w-5 h-[5px]"><path d="M6.500 0h7L10 5z"/></svg>
            <svg class="w-[17px] h-5" fill="none" stroke="#555" stroke-width="1.300"><path d="M1 2l15 16M8.500 0v8M8.500 12v8" /></svg>
            <svg class="w-[22px] h-[5px]"><path d="M7.500 0h7L11 5z"/></svg>
            <svg class="w-[19px] h-4" fill="none" stroke="#1e88f0" stroke-width="1.500"><path d="M15 2L3 14.500h14"/><path d="M7 7l4 4" stroke-width="3"/></svg>
            <svg class="w-[31px] h-[18px]" fill="none"><path d="M9 3h14v13H9z" stroke="#1e88f0" stroke-width="1.500"/><path d="M7.500 1.500h4v4h-4z" fill="#20d820" stroke="#000"/></svg>
            <svg class="w-1.5 h-[5px] overflow-visible"><path d="M-.5 0h7L3 5z"/></svg>
            <svg class="w-[25px] h-4 ml-2" fill="#1e88f0"><use href="#axismark" x="4" width="16" height="16"/><circle cx="17" cy="4" r="2.500" fill="#fff" stroke="#1e88f0" stroke-width="1.500"/></svg>
            <svg class="w-[22px] h-4" fill="#4c4c4c"><use href="#axismark" x="3" width="16" height="16"/><path d="M17 0l-4 5h4l-2 4" fill="none" stroke="#4c4c4c" stroke-width="1.300"/></svg>
            <svg class="w-[26px] h-4" fill="#4c4c4c"><use href="#axismark" x="5" width="16" height="16"/></svg>
            <span class="w-6 text-center">1:1</span>
            <svg class="w-[9px] h-[5px]"><path d="M1 0h7L4.500 5z"/></svg>
            <svg class="w-[22px] h-4 ml-[7px]" fill="none" stroke="#555"><circle cx="11" cy="8" r="3.500" stroke-width="3"/><circle cx="11" cy="8" r="5.500" stroke-width="2" stroke-dasharray="2.300 2"/></svg>
            <svg class="w-4 h-[5px]"><path d="M4.500 0h7L8 5z"/></svg>
            <svg class="w-[26px] h-4" stroke="#555" stroke-width="1.700"><path d="M6 8h14M13 1v14"/></svg>
            <svg class="w-[26px] h-4" fill="none" stroke="#555" stroke-width="1.300"><path d="M6 1.500h6v6H6zM9.500 15l3-5 3 5z"/><circle cx="17" cy="6.500" r="3"/></svg>
            <svg class="w-[30px] h-4"><circle cx="15" cy="8" r="7.500" fill="#0c5aa8"/><path d="M12 9l2 1 5-5" fill="none" stroke="#7fc4ff" stroke-width="1.300"/></svg>
            <svg class="w-6 h-4" fill="none" stroke="#555" stroke-width="1.300"><path d="M4.500 2.500h15v11h-15zM13 7l4-2M11 9l-4 2M14 5h3v3M7 8v3h3"/></svg>
            <svg class="w-[25px] h-4" stroke="#555" stroke-width="1.500"><path d="M5 2.500h15M5 8h15M5 13.500h15"/></svg>
        </div>
    </footer>
    <div class="h-0.5 bg-[#2a3344]"></div>

    <!-- application button -->
    <div class="absolute left-0 top-0 w-[41px] h-[41px] border border-black bg-linear-to-b from-[#bdbdbd] to-[#717171]">
        <svg class="w-[39px] h-[39px]"><path d="M4 28L14 3h6l7 25h-6l-2-6h-8l-2 5z" fill="#c9302c"/><path d="M13 17l3-8 3 8z" fill="#a5a5a5"/><path d="M4 28L14 3l2 3L9 27z" fill="#8e1518"/><path d="M9 22l11-2 1 3-12 2z" fill="#e46058"/><path d="M30 17h7l-3.500 4z" fill="#222"/></svg>
    </div>

    <!-- markup over the ribbon -->
    <div class="absolute left-[310px] top-[34px] w-[53px] h-10 border-[3px] border-[#ff2412] rounded-[3px]"></div>
    <div class="absolute left-[636px] top-[59px] w-[158px] h-[108px] border-[3px] border-[#ff2412] rounded-[3px]"></div>
    <svg class="absolute left-[380px] top-[68px] w-[240px] h-[42px]" viewBox="380 68 240 42"><path d="M382 70.500L440 76l159 18-.5-5.500L614 100.500 596 107l2-6.500-158-20-57-9z" fill="#ff2412"/></svg>
    <div class="absolute left-[1768px] top-[1018px] text-[36.5px] leading-[44px] font-black text-[#606060]/85 whitespace-nowrap">最需教育</div>

    <script>
        // minor line every 1/5 of a major cell
        var step = 16.656;
        var out = '';
        for (var i = -4; 70.7 + i * step < 1912; i++) {
            var x = (70.7 + i * step).toFixed(2);
            out += '<path d="M' + x + ' 194V1050" stroke-width="1.2" stroke="' + (i % 5 === 0 ? '#8f90a8' : '#b0b1bb') + '"/>';
        }
        for (var j = -4; 269.8 + j * step < 1050; j++) {
            var y = (269.8 + j * step).toFixed(2);
            out += '<path d="M0 ' + y + 'H1912" stroke-width="1.2" stroke="' + (j % 5 === 0 ? '#8f90a8' : '#b0b1bb') + '"/>';
        }
        document.getElementById('grid').innerHTML = out;
    </script>
</body>
</html>
